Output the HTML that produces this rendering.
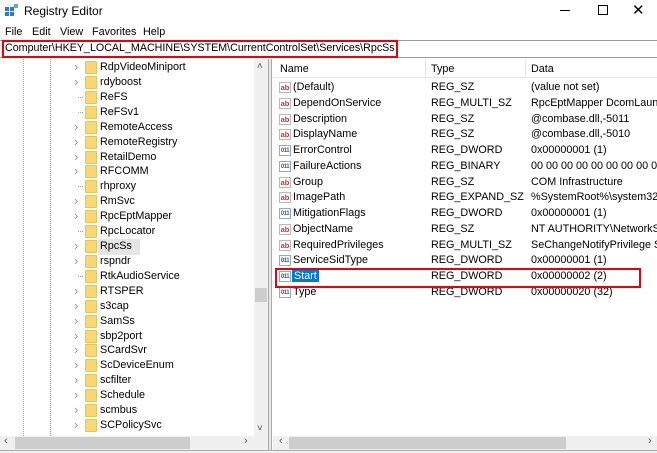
<!DOCTYPE html>
<html><head><meta charset="utf-8"><style>
*{margin:0;padding:0;box-sizing:border-box}
body{width:657px;height:453px;overflow:hidden;background:#fff;font-family:"Liberation Sans",sans-serif;font-size:10.8px;color:#000;position:relative}
.a{position:absolute;white-space:nowrap}
.t{position:absolute;left:100px;white-space:nowrap}
.f{position:absolute;left:85px;width:12px;height:13px;background:#f8d775;border:1px solid #e8c35a;border-radius:1px}
.ar{position:absolute;left:74px;color:#999;font-size:13px;line-height:12px}
.dl{position:absolute;border-left:1px dotted #aaa}
.ic{position:absolute;left:279px;width:12px;height:11px;font-size:7.5px;font-weight:bold;line-height:10px;text-align:center}
.ab{color:#c8352b;border:1px solid #bbb;background:#fff}
.bn{color:#2a62c0;border:1px solid #9ab;background:#fff;font-size:6px;letter-spacing:-0.5px}
</style></head><body>
<svg class="a" style="left:5px;top:4px" width="13" height="13"><rect x="0" y="3" width="4" height="4" fill="#2b79d4"/><rect x="5" y="3" width="4" height="4" fill="#2b79d4"/><rect x="0" y="8" width="4" height="4" fill="#2b79d4"/><rect x="5" y="8" width="4" height="4" fill="#2b79d4"/><rect x="9" y="0" width="4" height="4" fill="#5aa9ef"/></svg>
<div class="a" style="left:24px;top:4px;font-size:12px">Registry Editor</div>
<div class="a" style="left:560px;top:10px;width:10px;border-top:1px solid #000"></div>
<div class="a" style="left:598px;top:5px;width:10px;height:10px;border:1px solid #000"></div>
<div class="a" style="left:632px;top:1px;font-size:15px">✕</div>
<div class="a" style="left:5px;top:26px">File</div>
<div class="a" style="left:32px;top:26px">Edit</div>
<div class="a" style="left:60px;top:26px">View</div>
<div class="a" style="left:92px;top:26px">Favorites</div>
<div class="a" style="left:143px;top:26px">Help</div>
<div class="a" style="left:0;top:40px;width:657px;height:18px;border-top:1px solid #999;border-bottom:1px solid #999"></div>
<div class="a" style="left:2px;top:40px;width:396px;height:18px;border:2px solid #e8000b"></div>
<div class="a" style="left:5px;top:42px;font-size:10.7px">Computer\HKEY_LOCAL_MACHINE\SYSTEM\CurrentControlSet\Services\RpcSs</div>
<div class="a" style="left:268px;top:59px;width:4px;height:394px;background:#e8e8e8;border-left:1px solid #aaa;border-right:1px solid #aaa"></div>
<div class="dl" style="left:23px;top:59px;height:377px"></div>
<div class="dl" style="left:50px;top:59px;height:377px"></div>
<div class="a" style="left:98px;top:239px;width:42px;height:16px;background:#e5e5e5"></div>
<div id="tree"></div>
<div class="a" style="left:254px;top:59px;width:14px;height:377px;background:#f0f0f0"></div>
<div class="a" style="left:257px;top:61px;color:#555;font-size:10px">˄</div>
<div class="a" style="left:257px;top:423px;color:#555;font-size:10px">˅</div>
<div class="a" style="left:255px;top:288px;width:12px;height:14px;background:#cdcdcd"></div>
<div class="a" style="left:0;top:436px;width:268px;height:14px;background:#f0f0f0"></div>
<div class="a" style="left:15px;top:437px;width:175px;height:12px;background:#cdcdcd"></div>
<div class="a" style="left:4px;top:435px;color:#555">‹</div>
<div class="a" style="left:244px;top:435px;color:#555">›</div>
<div class="a" style="left:273px;top:59px;width:384px;height:19px;border-bottom:1px solid #e5e5e5"></div>
<div class="a" style="left:425px;top:59px;height:19px;border-left:1px solid #e5e5e5"></div>
<div class="a" style="left:525px;top:59px;height:19px;border-left:1px solid #e5e5e5"></div>
<div class="a" style="left:280px;top:63px">Name</div>
<div class="a" style="left:431px;top:63px">Type</div>
<div class="a" style="left:531px;top:63px">Data</div>
<div id="list"></div>
<div class="a" style="left:273px;top:436px;width:384px;height:14px;background:#f0f0f0"></div>
<div class="a" style="left:289px;top:437px;width:277px;height:12px;background:#cdcdcd"></div>
<div class="a" style="left:279px;top:435px;color:#555">‹</div>
<div class="a" style="left:648px;top:435px;color:#555">›</div>
<div class="a" style="left:0;top:450px;width:657px;height:3px;background:#f0f0f0;border-top:1px solid #aaa"></div>
<div class="a" style="left:275px;top:268px;width:366px;height:20px;border:2px solid #e8000b"></div>
<script>
var t=["RdpVideoMiniport",1,"rdyboost",1,"ReFS",0,"ReFSv1",0,"RemoteAccess",1,"RemoteRegistry",1,"RetailDemo",1,"RFCOMM",1,"rhproxy",0,"RmSvc",1,"RpcEptMapper",1,"RpcLocator",0,"RpcSs",1,"rspndr",1,"RtkAudioService",0,"RTSPER",1,"s3cap",1,"SamSs",1,"sbp2port",1,"SCardSvr",1,"ScDeviceEnum",1,"scfilter",1,"Schedule",1,"scmbus",1,"SCPolicySvc",1];
var h="";for(var i=0;i<t.length;i+=2){var y=60+(i/2)*14.92;
h+='<div class="f" style="top:'+(y+1)+'px"></div><div class="t" style="top:'+(y+1)+'px">'+t[i]+'</div>';
h+=t[i+1]?'<div class="ar" style="top:'+(y+1)+'px">›</div>':'<div class="a" style="left:78px;top:'+(y+7)+'px;width:5px;border-top:1px dotted #aaa"></div>';}
document.getElementById("tree").innerHTML=h;
var L=[["(Default)","REG_SZ","(value not set)",0],["DependOnService","REG_MULTI_SZ","RpcEptMapper DcomLaunch",0],["Description","REG_SZ","@combase.dll,-5011",0],["DisplayName","REG_SZ","@combase.dll,-5010",0],["ErrorControl","REG_DWORD","0x00000001 (1)",1],["FailureActions","REG_BINARY","00 00 00 00 00 00 00 00 00 00 00",1],["Group","REG_SZ","COM Infrastructure",0],["ImagePath","REG_EXPAND_SZ","%SystemRoot%\\system32\\svchost",0],["MitigationFlags","REG_DWORD","0x00000001 (1)",1],["ObjectName","REG_SZ","NT AUTHORITY\\NetworkService",0],["RequiredPrivileges","REG_MULTI_SZ","SeChangeNotifyPrivilege SeCreate",0],["ServiceSidType","REG_DWORD","0x00000001 (1)",1],["Start","REG_DWORD","0x00000002 (2)",1],["Type","REG_DWORD","0x00000020 (32)",1]];
h="";for(var j=0;j<L.length;j++){var y=81+j*15.75;var r=L[j];
h+='<div class="ic '+(r[3]?'bn':'ab')+'" style="top:'+(y+1)+'px">'+(r[3]?'011':'ab')+'</div>';
var s=r[0]=="Start"?'background:#0078d7;color:#fff;padding:0 2px;left:292px;':'left:293px;';
h+='<div class="a" style="'+s+'top:'+y+'px;width:'+(r[0]=="Start"?'auto':'130px')+';overflow:hidden">'+r[0]+'</div>';
h+='<div class="a" style="left:431px;top:'+y+'px">'+r[1]+'</div>';
h+='<div class="a" style="left:531px;top:'+y+'px;width:126px;overflow:hidden">'+r[2]+'</div>';}
document.getElementById("list").innerHTML=h;
</script>
</body></html>
